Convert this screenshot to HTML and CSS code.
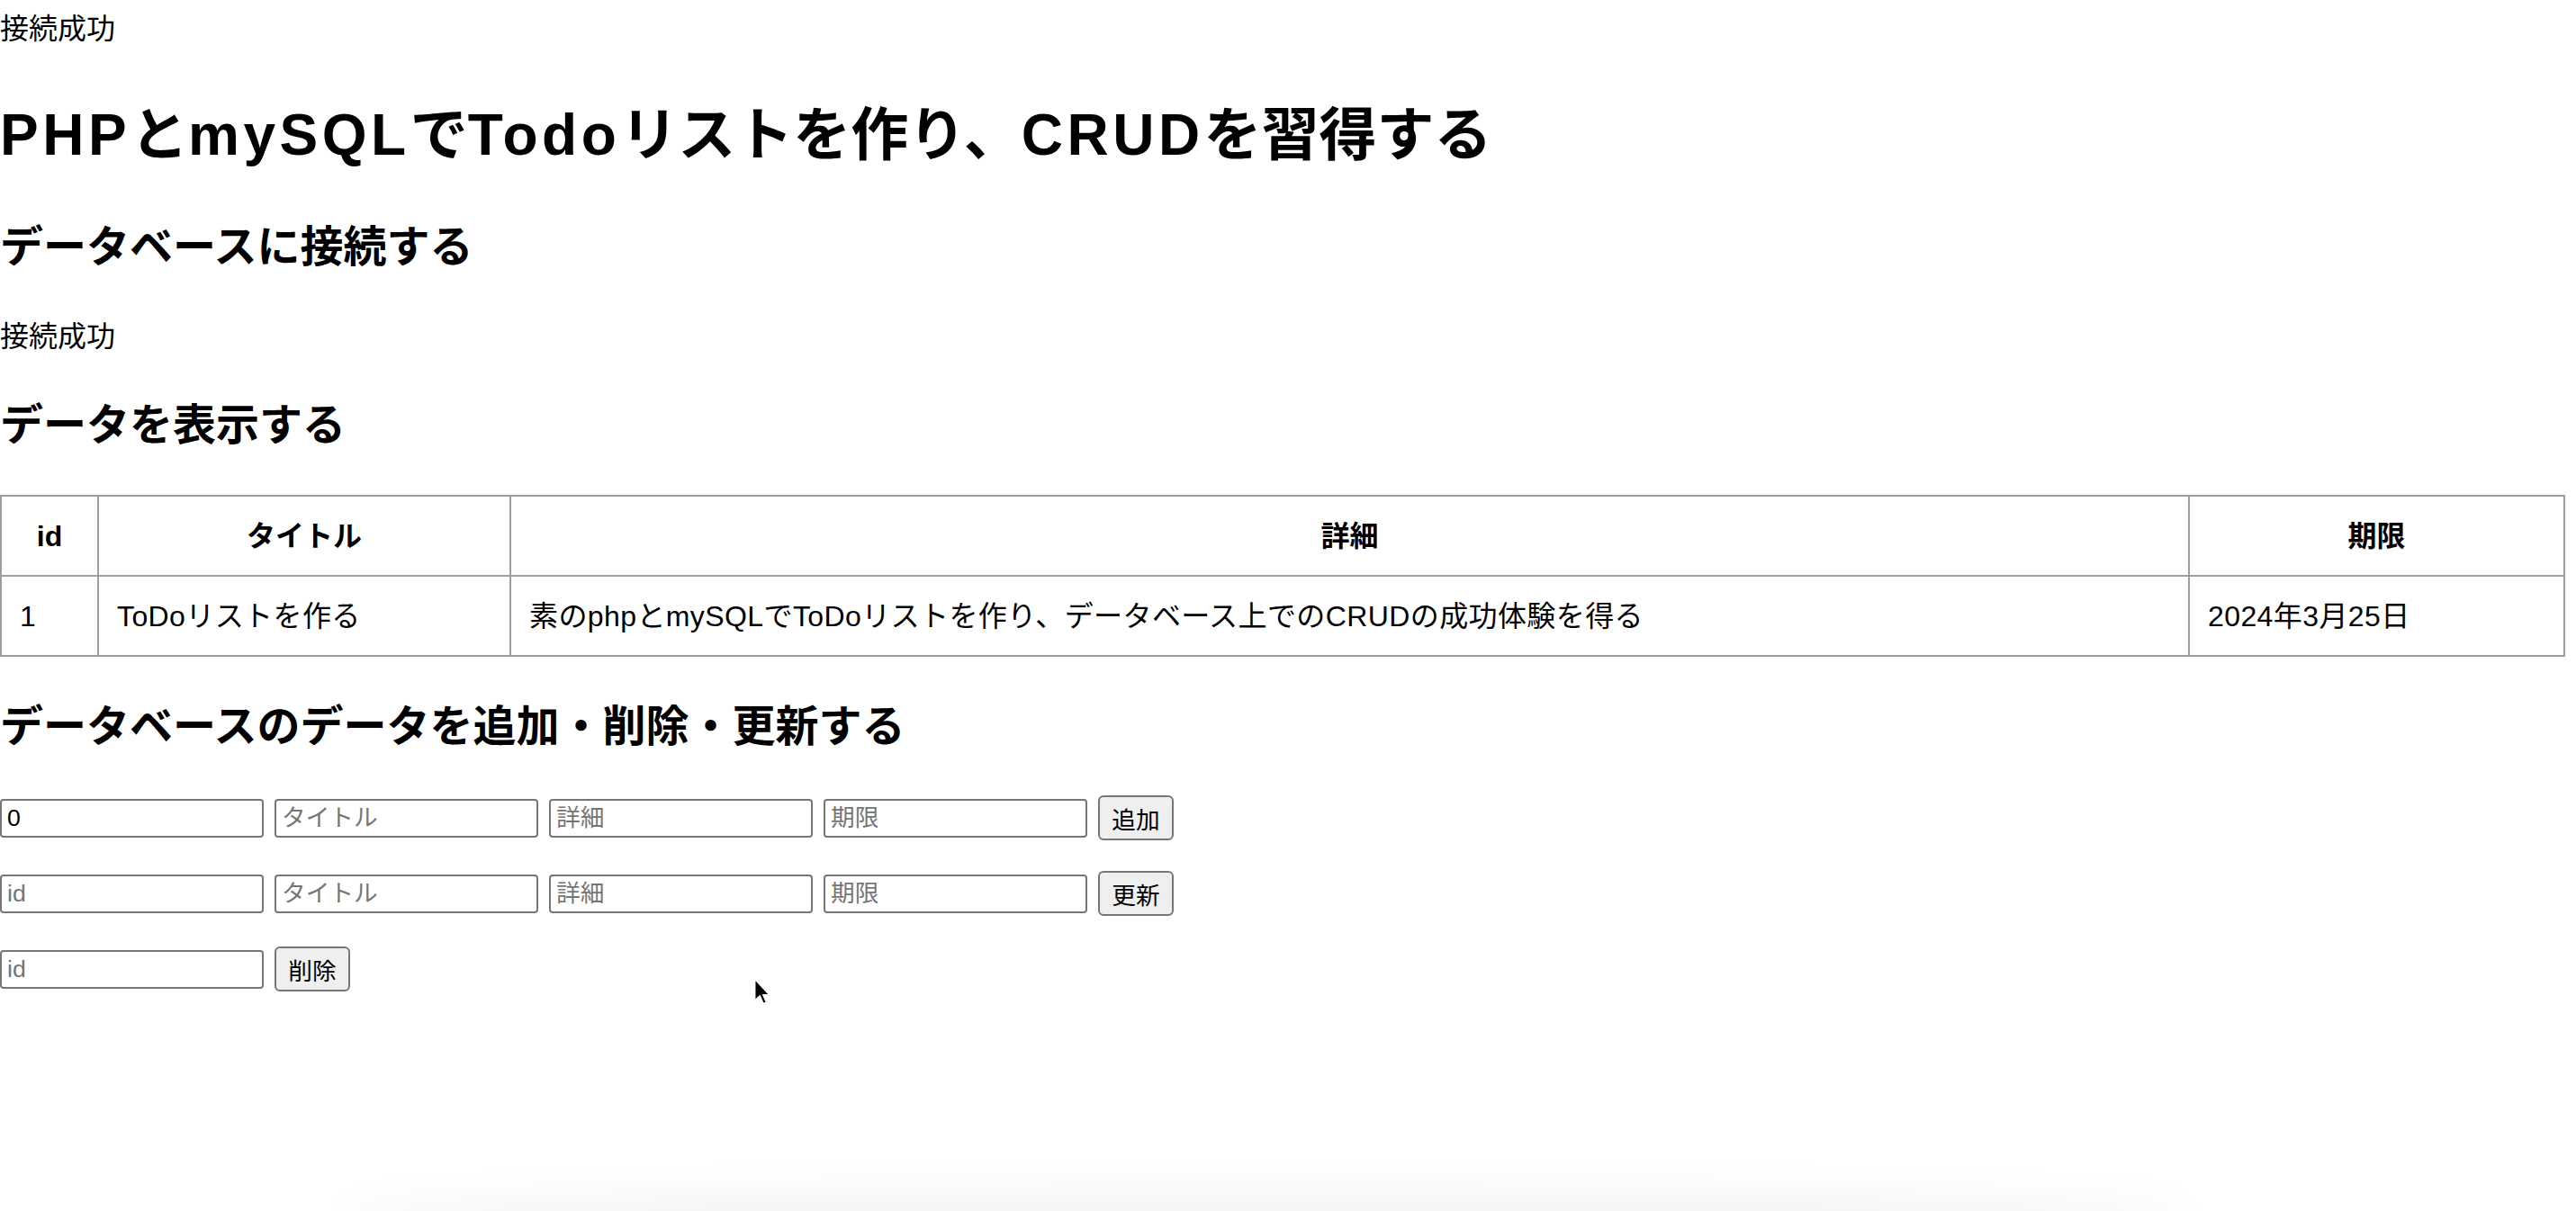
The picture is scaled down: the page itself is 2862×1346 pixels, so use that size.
FILE: index.html
```html
<!DOCTYPE html>
<html lang="ja">
<head>
<meta charset="utf-8">
<title>Todo CRUD</title>
<link rel="stylesheet" href="styles.css">
</head>
<body>
<div class="page">
  <div class="status status-top">接続成功</div>
  <h1 class="title"><span class="latin">PHP</span>と<span class="latin">mySQL</span>で<span class="latin">Todo</span>リストを作り、<span class="latin">CRUD</span>を習得する</h1>
  <h2 class="section section-connect">データベースに接続する</h2>
  <p class="status status-mid">接続成功</p>
  <h2 class="section section-show">データを表示する</h2>
  <table class="todo-table">
    <colgroup>
      <col class="col-id">
      <col class="col-title">
      <col class="col-detail">
      <col class="col-due">
    </colgroup>
    <thead>
      <tr><th>id</th><th>タイトル</th><th>詳細</th><th>期限</th></tr>
    </thead>
    <tbody>
      <tr>
        <td>1</td>
        <td>ToDoリストを作る</td>
        <td>素のphpとmySQLでToDoリストを作り、データベース上でのCRUDの成功体験を得る</td>
        <td>2024年3月25日</td>
      </tr>
    </tbody>
  </table>
  <h2 class="section section-edit">データベースのデータを追加・削除・更新する</h2>
  <div class="forms">
    <form class="form-row">
      <input class="field" type="text" value="0">
      <input class="field" type="text" placeholder="タイトル">
      <input class="field" type="text" placeholder="詳細">
      <input class="field" type="text" placeholder="期限">
      <button class="btn" type="button">追加</button>
    </form>
    <form class="form-row">
      <input class="field" type="text" placeholder="id">
      <input class="field" type="text" placeholder="タイトル">
      <input class="field" type="text" placeholder="詳細">
      <input class="field" type="text" placeholder="期限">
      <button class="btn" type="button">更新</button>
    </form>
    <form class="form-row">
      <input class="field" type="text" placeholder="id">
      <button class="btn" type="button">削除</button>
    </form>
  </div>
</div>
<svg class="cursor" viewBox="0 0 12 20" width="19" height="31" aria-hidden="true">
  <path d="M1 1 L1 16 L4.6 12.7 L7 18.4 L9.2 17.5 L6.8 12 L11.2 12 Z" fill="#000" stroke="#fff" stroke-width="0.9" stroke-linejoin="round"/>
</svg>
<div class="bottom-shade"></div>
</body>
</html>
```

FILE: styles.css
```css
html, body {
  margin: 0;
  padding: 0;
  background: #ffffff;
}

body {
  font-family: "Liberation Sans", "Noto Sans CJK JP", sans-serif;
  color: #000;
  font-size: 32px;
  line-height: 48px;
  overflow: hidden;
}

.page {
  padding-top: 8px;
}

.status {
  margin: 0;
  font-size: 32px;
  line-height: 48px;
}

.status-mid {
  margin-top: 45px;
}

.title {
  margin: 54px 0 0 0;
  font-size: 64px;
  line-height: 80px;
  font-weight: 700;
}

.title .latin {
  letter-spacing: 4.5px;
}

.section {
  margin: 0;
  font-size: 48px;
  line-height: 60px;
  font-weight: 700;
}

.section-connect {
  margin-top: 55px;
}

.section-show {
  margin-top: 45px;
}

.section-edit {
  margin-top: 48px;
}

.todo-table {
  margin-top: 47px;
  width: 2848px;
  table-layout: fixed;
  border-collapse: collapse;
  border: 2px solid #9e9e9e;
}

.col-id { width: 108px; }
.col-title { width: 458px; }
.col-detail { width: 1865px; }
.col-due { width: 417px; }

.todo-table th,
.todo-table td {
  border: 2px solid #9e9e9e;
  padding: 20px 20px 19px 20px;
  font-size: 32px;
  line-height: 48px;
  white-space: nowrap;
}

.todo-table th {
  font-weight: 700;
  text-align: center;
}

.todo-table td {
  font-weight: 400;
  text-align: left;
  letter-spacing: 0.4px;
}

.forms {
  margin-top: 46px;
  display: flex;
  flex-direction: column;
  gap: 34px;
}

.form-row {
  margin: 0;
  display: flex;
  align-items: center;
  gap: 12px;
  height: 50px;
}

.field {
  box-sizing: border-box;
  width: 293px;
  height: 43px;
  margin: 0;
  padding: 0 6px;
  border: 2px solid #767676;
  border-radius: 4px;
  background: #fff;
  font-family: "Liberation Sans", "Noto Sans CJK JP", sans-serif;
  font-size: 26.67px;
  color: #000;
  outline: none;
}

.field::placeholder {
  color: #757575;
}

.btn {
  box-sizing: border-box;
  width: 84px;
  height: 50px;
  margin: 0;
  padding: 0;
  border: 2px solid #767676;
  border-radius: 6px;
  background: #efefef;
  font-family: "Liberation Sans", "Noto Sans CJK JP", sans-serif;
  font-size: 26.67px;
  color: #000;
}

.cursor {
  position: absolute;
  left: 837px;
  top: 1087px;
}

.bottom-shade {
  position: absolute;
  left: 380px;
  width: 2050px;
  bottom: -40px;
  height: 60px;
  border-radius: 50%;
  background: rgba(0, 0, 0, 0.05);
  filter: blur(22px);
}
```
